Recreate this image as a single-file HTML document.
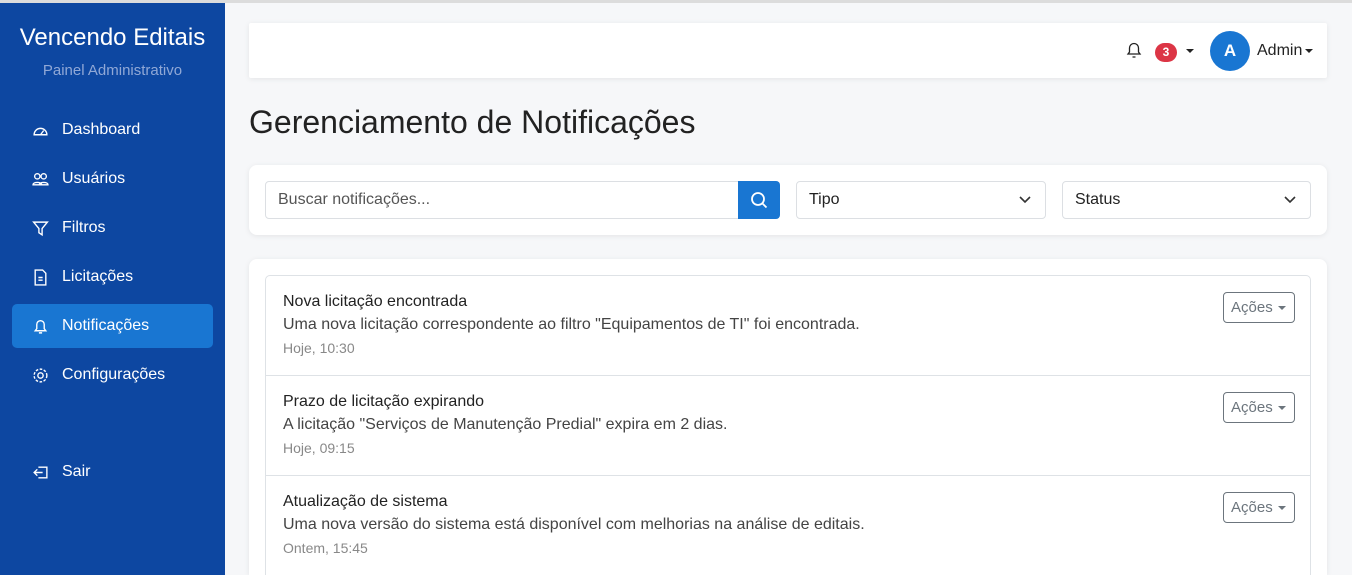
<!DOCTYPE html>
<html style="height:575px;overflow:hidden"><head><meta charset="utf-8"><style>
*{box-sizing:border-box;margin:0;padding:0}
body{width:1352px;height:575px;overflow:hidden;font-family:"Liberation Sans",sans-serif;background:#f6f7f9;position:relative}
.topline{position:absolute;left:0;top:0;width:1352px;height:3px;background:#dcdcdc}
.sb{position:absolute;left:0;top:3px;width:225px;height:572px;background:#0d47a1;color:#fff}
.sb h1{font-weight:400;font-size:24px;text-align:center;margin-top:21px}
.sb .sub{text-align:center;color:#90a8d6;font-size:15px;margin-top:10px}
.nav{position:absolute;left:12px;width:201px;height:44px;display:flex;align-items:center;padding-left:20px;font-size:16px;border-radius:5px}
.nav svg{width:17px;height:17px;margin-right:13px;fill:none;stroke:#fff;stroke-width:1.3}
.act{background:#1976d2}
.card{position:absolute;background:#fff;border-radius:8px;box-shadow:0 1px 6px rgba(0,0,0,.08)}
.inp{position:absolute;border:1px solid #dcdfe3;border-radius:4px;height:38px;top:16px;font-size:16px;color:#222;padding:9px 12px}
.item{position:absolute;left:0;width:1045px;height:100px;border-bottom:1px solid #dee2e6;padding:17px 17px}
.item b{font-weight:400;font-size:16px;color:#222;display:block}
.item p{font-size:16px;color:#444;margin-top:5px}
.item small{display:block;font-size:14px;color:#888;margin-top:6px}
.btn{position:absolute;right:16px;top:16px;border:1px solid #6c757d;border-radius:4px;color:#6c757d;font-size:15px;padding:6px 7px;width:72px;height:31px}
.caret{display:inline-block;border-left:4px solid transparent;border-right:4px solid transparent;border-top:4px solid currentColor;vertical-align:middle;margin-left:5px}
</style></head><body>
<div class="topline"></div>
<div class="sb">
<h1>Vencendo Editais</h1>
<div class="sub">Painel Administrativo</div>
<div class="nav" style="top:105px"><svg viewBox="0 0 16 16"><path d="M2 12a6 6 0 1 1 12 0H2z M8 12l3-4"/></svg>Dashboard</div>
<div class="nav" style="top:154px"><svg viewBox="0 0 16 16"><circle cx="5" cy="5" r="2.5"/><circle cx="11" cy="5" r="2.5"/><path d="M1 13c0-3 8-3 8 0zM7 13c0-3 8-3 8 0z"/></svg>Usuários</div>
<div class="nav" style="top:203px"><svg viewBox="0 0 16 16"><path d="M1.5 2h13L9.5 8v6l-3-2V8z"/></svg>Filtros</div>
<div class="nav" style="top:252px"><svg viewBox="0 0 16 16"><path d="M3 1h7l3 3v11H3z M6 8h4M6 10.5h4"/></svg>Licitações</div>
<div class="nav act" style="top:301px"><svg viewBox="0 0 16 16"><path d="M3 12h10l-1.5-2V6a3.5 3.5 0 0 0-7 0v4z M6.5 14h3"/></svg>Notificações</div>
<div class="nav" style="top:350px"><svg viewBox="0 0 16 16"><circle cx="8" cy="8" r="2.5"/><circle cx="8" cy="8" r="6" stroke-dasharray="2.5 1.4"/></svg>Configurações</div>
<div class="nav" style="top:447px"><svg viewBox="0 0 16 16"><path d="M6 3h8v10H6 M10 8H2m3-3L2 8l3 3"/></svg>Sair</div>
</div>
<div class="card" style="left:249px;top:23px;width:1078px;height:55px;border-radius:2px">
<svg style="position:absolute;left:877px;top:18px" width="16" height="18" viewBox="0 0 16 18" fill="none" stroke="#222" stroke-width="1.3"><path d="M2 13h12l-1.5-2V7a4.5 4.5 0 0 0-9 0v4z M6.5 16h3"/></svg>
<div style="position:absolute;left:906px;top:20px;width:22px;height:19px;border-radius:10px;background:#dc3545;color:#fff;font-size:12px;font-weight:bold;text-align:center;line-height:19px">3</div>
<span class="caret" style="position:absolute;left:932px;top:26px;color:#222"></span>
<div style="position:absolute;left:961px;top:8px;width:40px;height:40px;border-radius:50%;background:#1976d2;color:#fff;font-weight:bold;font-size:17px;text-align:center;line-height:40px">A</div>
<div style="position:absolute;left:1008px;top:19px;font-size:16px;color:#222">Admin<span class="caret" style="margin-left:3px"></span></div>
</div>
<div style="position:absolute;left:249px;top:104px;font-size:32px;color:#222">Gerenciamento de Notificações</div>
<div class="card" style="left:249px;top:165px;width:1078px;height:70px">
<div class="inp" style="left:16px;width:480px;color:#555">Buscar notificações...</div>
<div style="position:absolute;left:489px;top:16px;width:42px;height:38px;background:#1976d2;border-radius:0 4px 4px 0"><svg width="42" height="38" viewBox="0 0 42 38" fill="none" stroke="#fff" stroke-width="1.8"><circle cx="20" cy="18" r="6"/><path d="M24.5 22.5l4 4"/></svg></div>
<div class="inp" style="left:547px;width:250px">Tipo<svg style="position:absolute;right:14px;top:14px" width="12" height="8" viewBox="0 0 12 8" fill="none" stroke="#333" stroke-width="1.6"><path d="M1 1l5 5 5-5"/></svg></div>
<div class="inp" style="left:813px;width:249px">Status<svg style="position:absolute;right:14px;top:14px" width="12" height="8" viewBox="0 0 12 8" fill="none" stroke="#333" stroke-width="1.6"><path d="M1 1l5 5 5-5"/></svg></div>
</div>
<div class="card" style="left:249px;top:259px;width:1078px;height:316px;border-radius:8px 8px 0 0;overflow:hidden">
<div style="position:absolute;left:16px;top:16px;width:1046px;height:330px;border:1px solid #dee2e6;border-radius:5px;overflow:hidden">
<div class="item" style="top:0"><b>Nova licitação encontrada</b><p>Uma nova licitação correspondente ao filtro "Equipamentos de TI" foi encontrada.</p><small>Hoje, 10:30</small><div class="btn">Ações<span class="caret"></span></div></div>
<div class="item" style="top:100px"><b>Prazo de licitação expirando</b><p>A licitação "Serviços de Manutenção Predial" expira em 2 dias.</p><small>Hoje, 09:15</small><div class="btn">Ações<span class="caret"></span></div></div>
<div class="item" style="top:200px"><b>Atualização de sistema</b><p>Uma nova versão do sistema está disponível com melhorias na análise de editais.</p><small>Ontem, 15:45</small><div class="btn">Ações<span class="caret"></span></div></div>
</div></div>
</body></html>
